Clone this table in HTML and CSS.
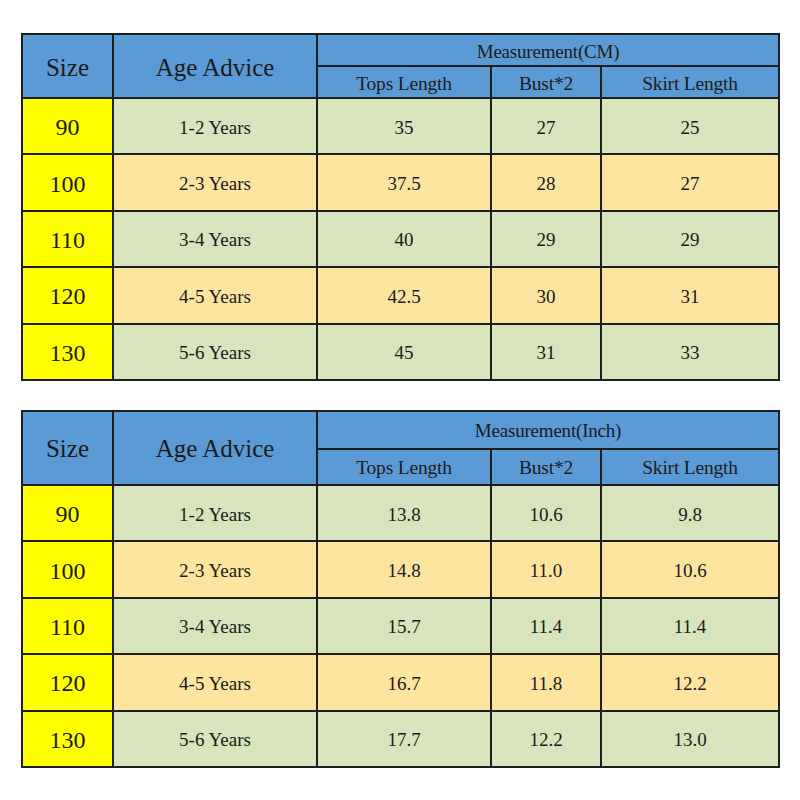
FILE: index.html
```html
<!DOCTYPE html>
<html>
<head>
<meta charset="utf-8">
<link rel="stylesheet" href="styles.css">
</head>
<body>
<div class="page">
  <table class="chart">
    <colgroup><col class="c1"><col class="c2"><col class="c3"><col class="c4"><col class="c5"></colgroup>
    <tr class="h1">
      <th rowspan="2" class="big">Size</th>
      <th rowspan="2" class="big">Age Advice</th>
      <th colspan="3" class="meas">Measurement(CM)</th>
    </tr>
    <tr class="h2">
      <th class="sub">Tops Length</th><th class="sub">Bust*2</th><th class="sub">Skirt Length</th>
    </tr>
    <tr class="row green"><td class="size">90</td><td>1-2 Years</td><td>35</td><td>27</td><td>25</td></tr>
    <tr class="row orange"><td class="size">100</td><td>2-3 Years</td><td>37.5</td><td>28</td><td>27</td></tr>
    <tr class="row green"><td class="size">110</td><td>3-4 Years</td><td>40</td><td>29</td><td>29</td></tr>
    <tr class="row orange"><td class="size">120</td><td>4-5 Years</td><td>42.5</td><td>30</td><td>31</td></tr>
    <tr class="row green"><td class="size">130</td><td>5-6 Years</td><td>45</td><td>31</td><td>33</td></tr>
  </table>

  <table class="chart second">
    <colgroup><col class="c1"><col class="c2"><col class="c3"><col class="c4"><col class="c5"></colgroup>
    <tr class="h1b">
      <th rowspan="2" class="big">Size</th>
      <th rowspan="2" class="big">Age Advice</th>
      <th colspan="3" class="meas">Measurement(Inch)</th>
    </tr>
    <tr class="h2b">
      <th class="sub">Tops Length</th><th class="sub">Bust*2</th><th class="sub">Skirt Length</th>
    </tr>
    <tr class="row green"><td class="size">90</td><td>1-2 Years</td><td>13.8</td><td>10.6</td><td>9.8</td></tr>
    <tr class="row orange"><td class="size">100</td><td>2-3 Years</td><td>14.8</td><td>11.0</td><td>10.6</td></tr>
    <tr class="row green"><td class="size">110</td><td>3-4 Years</td><td>15.7</td><td>11.4</td><td>11.4</td></tr>
    <tr class="row orange"><td class="size">120</td><td>4-5 Years</td><td>16.7</td><td>11.8</td><td>12.2</td></tr>
    <tr class="row green"><td class="size">130</td><td>5-6 Years</td><td>17.7</td><td>12.2</td><td>13.0</td></tr>
  </table>
</div>
</body>
</html>
```

FILE: styles.css
```css
html, body {
  margin: 0;
  padding: 0;
  background: #ffffff;
}
.page {
  padding: 33px 0 0 21px;
  font-family: "Liberation Serif", "Times New Roman", serif;
  color: #1a1a1a;
}
.chart {
  border-collapse: collapse;
  table-layout: fixed;
  width: 757px;
}
.second {
  margin-top: 29px;
}
.c1 { width: 91px; }
.c2 { width: 204px; }
.c3 { width: 174px; }
.c4 { width: 110px; }
.c5 { width: 178px; }
.chart th, .chart td {
  border: 2px solid #1e1e1e;
  padding: 3px 0 0 0;
  text-align: center;
  vertical-align: middle;
  font-weight: normal;
}
.chart th {
  background: #5b9bd5;
}
.big {
  font-size: 25px;
}
.meas {
  font-size: 19px;
  letter-spacing: -0.2px;
}
.sub {
  font-size: 19.5px;
  letter-spacing: -0.2px;
}
.h1 { height: 32px; }
.h2 { height: 32px; }
.h1b { height: 38px; }
.h2b { height: 36px; }
.row { height: 56.4px; }
.row td {
  font-size: 19px;
}
.green td { background: #d8e4bd; }
.orange td { background: #fde59f; }
.chart td.size {
  background: #ffff00;
  font-size: 24px;
}
```
